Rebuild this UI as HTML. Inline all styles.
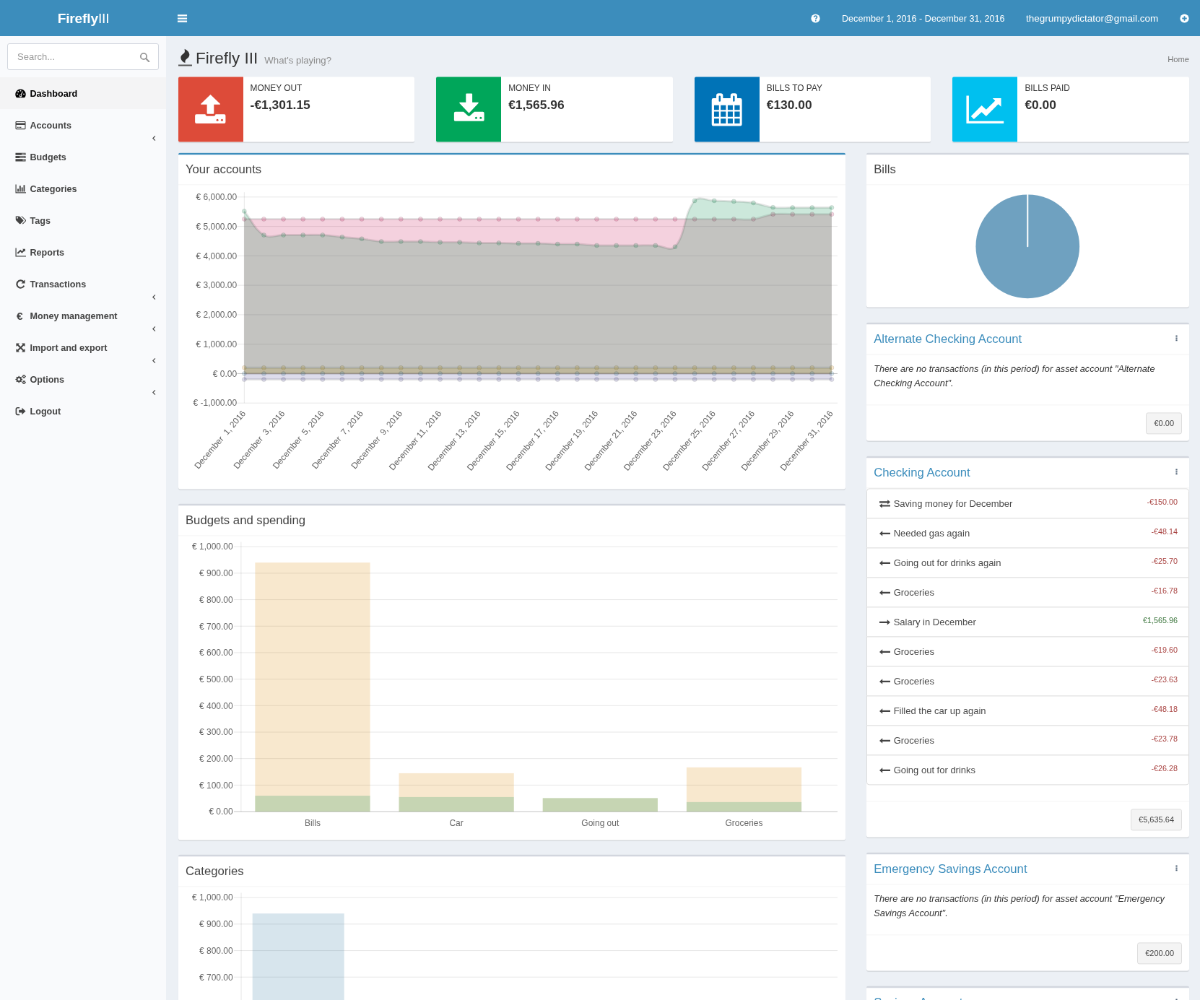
<!DOCTYPE html>
<html lang="en">
<head>
<meta charset="utf-8">
<title>What's playing? » Firefly III</title>
<style>
*{box-sizing:border-box}
html,body{margin:0;padding:0;width:1200px;height:1000px;overflow:hidden;background:#ecf0f5}
#wrap{will-change:transform;position:absolute;left:0;top:0;width:1662px;height:1386px;transform:scale(.72202);transform-origin:0 0;font-family:"Liberation Sans",sans-serif;font-size:13px;line-height:20px;color:#333;background:#ecf0f5;overflow:hidden}
a{color:#3c8dbc;text-decoration:none}
ul,ol{list-style:none;margin:0;padding:0}
svg.ic{display:inline-block;vertical-align:middle}
/* header */
.hdr{position:absolute;left:0;top:0;width:100%;height:50px;background:#3c8dbc;color:#fff}
.logo{position:absolute;left:0;top:1.100px;width:231px;height:50px;line-height:50px;text-align:center;color:#fff;font-size:19.200px;background:#3c8dbc;font-weight:300;letter-spacing:-.2px}
.logo b{font-weight:700}
.toggle{position:absolute;left:245px;top:0;height:50px;width:15px;color:#fff;display:flex;align-items:center}
.nv{position:absolute;top:1.100px;height:50px;line-height:50px;color:#fff;white-space:nowrap}
/* sidebar */
.sidebar{position:absolute;left:0;top:50px;width:231px;height:1340px;background:#f9fafc;border-right:1px solid #d2d6de}
.sform{margin:10px;height:37px;border:1px solid #d2d6de;border-radius:3px;background:#fff;position:relative}
.sform .ph{position:absolute;left:13px;top:0;line-height:35px;color:#999;font-size:13px}
.sform svg{position:absolute;right:11.500px;top:10.500px;color:#999}
.menu li{position:relative;height:44px}
.menu li a{display:block;height:44px;padding:13px 5px 11px 15px;color:#444;font-weight:700;font-size:12.6px;line-height:20px;white-space:nowrap;border-left:3px solid transparent}
.menu li.active a{background:#f4f4f5;color:#000}
.mi{display:inline-block;width:23.500px;padding-left:2.500px;vertical-align:top;line-height:18px}
.mi.euro{font-size:15.500px;padding-left:5px;line-height:19px}
.ml{display:inline-block;vertical-align:top}
.angle{position:absolute;right:12.500px;top:35.500px;color:#444;line-height:9px;height:9px}.angle svg{display:block}
/* content */
.cw{position:absolute;left:230px;top:50px;right:0;bottom:0;background:#ecf0f5}.ch,.content{transform:translateY(.4px)}
.ch{position:relative;padding:15px 15px 0 16.600px;height:41px}
.ch h1{margin:0;padding-left:24.500px;position:relative;top:2.800px;font-size:22.500px;line-height:26px;font-weight:400;color:#333;white-space:nowrap}
.ch h1 small{font-size:13.200px;color:#8c8c8c;font-weight:300;padding-left:9px}
.ch .fire{position:absolute;left:0;top:-1.300px}
.bc{position:absolute;right:15px;top:22px;font-size:11.200px;color:#777}
.content{padding:15px 15px 15px 16.600px}
.row{display:flex;margin:0 -15px}
.col3{width:25%;padding:0 15px}
.col8{width:954px;padding:0 15px;margin-left:.4px}
.col4{width:477px;padding:0 15px;margin-left:-.6px}.col4 .box{margin-bottom:21px}
.info-box{height:90px;background:#fff;border-radius:2px;box-shadow:0 1px 1px rgba(0,0,0,.1);margin-bottom:15px;position:relative}
.ibi{position:absolute;left:0;top:0;width:90px;height:90px;border-radius:2px 0 0 2px;color:#fff;display:flex;align-items:center;justify-content:center}
.ibc{margin-left:90px;padding:5px 10px}
.ibt{display:block;text-transform:uppercase;font-size:11.900px;line-height:20px;white-space:nowrap;position:relative;top:1.200px}
.ibn{display:block;font-weight:700;font-size:17.400px;line-height:26px;margin-top:1px}
.box{position:relative;background:#fff;border-top:3px solid #d2d6de;border-radius:3px;margin-bottom:20px;box-shadow:0 1px 1px rgba(0,0,0,.1)}
.box.primary{border-top-color:#3c8dbc}
.box-header{position:relative;padding:10.900px 10px 0;height:42px;color:#444}
.box-header.wb{border-bottom:1px solid #f4f4f4}
.box-title{margin:0;font-size:16.700px;line-height:20px;font-weight:400;display:inline-block;white-space:nowrap}
.tools{position:absolute;right:13px;top:8px;color:#97a0b3}
.tools svg{color:#54667a}
.box-body{padding:10px}
.box-body p{margin:0 0 9px;font-size:12.750px;line-height:20px}
.box-body em{font-style:italic}
.box-footer{border-top:1px solid #f4f4f4;padding:10px;height:50px;text-align:right}
.btn{display:inline-block;border:1px solid #ddd;background:#f4f4f4;color:#444;border-radius:3px;font-size:11px;line-height:18px;padding:5px 10px;height:30px}
svg.chart{position:absolute;left:0;top:-3px;width:100%;height:calc(100% + 3px);overflow:visible}
.chartbody{height:421px}
.lg{margin-bottom:22px;border-radius:4px}
.lgi{display:block;position:relative;height:42px;padding:10.800px 15px 0;border:1px solid #ddd;margin-bottom:-1px;background:#fff;color:#4a4a4a;font-size:13px;white-space:nowrap}
.lgi:first-child{border-radius:4px 4px 0 0}
.lgi:last-child{border-radius:0 0 4px 4px;margin-bottom:0}
.ti{display:inline-block;width:21.500px;padding-left:1.500px;color:#444;vertical-align:top;line-height:18px}
.tl{display:inline-block;vertical-align:top}
.amt{position:absolute;right:15px;top:7.800px;font-size:10.800px}
.neg{color:#a94442}.pos{color:#3c763d}
</style>
</head>
<body>
<div id="wrap">
<header class="hdr">
  <a class="logo"><b>Firefly</b>III</a>
  <a class="toggle"><svg class="ic" width="15" height="15" viewBox="0 0 16 16" ><path fill="currentColor" d="M1 2.5h14v2.4H1zM1 6.8h14v2.4H1zM1 11.1h14v2.4H1z"/></svg></a>
  <span class="nv" style="left:1123.400px;top:.4px"><svg class="ic" width="13" height="13" viewBox="0 0 16 16" ><circle cx="8" cy="8" r="7.5" fill="currentColor"/><path d="M5.6 6.2c0-1.5 1.1-2.5 2.5-2.5s2.4.9 2.4 2.1c0 1.7-2.1 1.8-2.1 3.6" fill="none" stroke="#3c8dbc" stroke-width="1.9"/><circle cx="8.3" cy="11.9" r="1.15" fill="#3c8dbc"/></svg></span>
  <span class="nv" style="left:1166px;font-size:12.600px">December 1, 2016 - December 31, 2016</span>
  <span class="nv" style="left:1421px;font-size:13.500px">thegrumpydictator@gmail.com</span>
  <span class="nv" style="left:1634.400px;top:.4px"><svg class="ic" width="13" height="13" viewBox="0 0 16 16" ><circle cx="8" cy="8" r="7.5" fill="currentColor"/><path d="M4 6.9h2.9V4h2.2v2.9H12v2.2H9.1V12H6.900V9.1H4z" fill="#3c8dbc"/></svg></span>
</header>
<aside class="sidebar">
  <div class="sform"><span class="ph">Search...</span><svg class="ic" width="14.5" height="14.5" viewBox="0 0 16 16" ><circle cx="6.6" cy="6.6" r="4.6" fill="none" stroke="currentColor" stroke-width="2"/><path d="M10 10l4.6 4.6" stroke="currentColor" stroke-width="2.4" stroke-linecap="round"/></svg></div>
  <ul class="menu">
<li class="active"><a><span class="mi"><svg class="ic" width="15" height="15" viewBox="0 0 16 16" ><path fill="currentColor" d="M8 1.6a7.6 7.6 0 0 0-6.300 11.900c.2.300.5.500.9.500h10.800c.4 0 .7-.2.900-.5A7.600 7.600 0 0 0 8 1.600z"/><g fill="#f4f4f5"><circle cx="8" cy="3.900" r="1"/><circle cx="4.500" cy="5.400" r="1"/><circle cx="3.200" cy="8.900" r="1"/><circle cx="12.800" cy="8.900" r="1"/><path d="M10.600 4.700l1.100.5-2.300 4.600a2 2 0 1 1-1.100-.500z"/></g><circle cx="8" cy="11" r="1" fill="currentColor"/></svg></span><span class="ml">Dashboard</span></a></li>
<li><a><span class="mi"><svg class="ic" width="15" height="15" viewBox="0 0 16 16" ><path fill="currentColor" fill-rule="evenodd" d="M1.800 2h12.400c.7 0 1.300.6 1.300 1.300v9.400c0 .7-.6 1.300-1.300 1.300H1.800C1.100 14 .5 13.400.5 12.700V3.300C.5 2.600 1.100 2 1.800 2zm-.1 1.300v1.500h12.600V3.300zM1.700 7.500v5.200h12.600V7.500zM3 10.500h2v1.100H3zm3 0h3v1.100H6z"/></svg></span><span class="ml">Accounts</span><span class="angle"><svg class="ic" width="9" height="9" viewBox="0 0 16 16" ><path fill="none" stroke="currentColor" stroke-width="2" d="M10.500 2.500L5 8l5.500 5.500"/></svg></span></a></li>
<li><a><span class="mi"><svg class="ic" width="15" height="15" viewBox="0 0 16 16" ><path fill="currentColor" d="M.5 1.800h15v3.300H.5zM.5 6.400h15v3.300H.5zM.5 11h15v3.300H.5z"/><path fill="#f9fafc" d="M9.500 2.900h4.800v1.100H9.500zM6.500 7.500h7.800v1.100H6.500zM11 12.100h3.300v1.100H11z"/></svg></span><span class="ml">Budgets</span></a></li>
<li><a><span class="mi"><svg class="ic" width="15" height="15" viewBox="0 0 16 16" ><path fill="currentColor" d="M.5 1.500h1.300v11.700H16v1.300H.5zM3.300 8h2v4.200h-2zM6.300 3.500h2v8.700h-2zM9.300 6h2v6.200h-2zM12.300 2.500h2v9.700h-2z"/></svg></span><span class="ml">Categories</span></a></li>
<li><a><span class="mi"><svg class="ic" width="15" height="15" viewBox="0 0 16 16" ><path fill="currentColor" d="M.8 1.500h4.500c.5 0 1.200.3 1.600.7l5 5c.5.500.5 1.200 0 1.700l-3.900 3.900c-.5.500-1.200.5-1.700 0l-5-5C1 7.400.8 6.700.8 6.200zm2.400 1.400a1.100 1.100 0 1 0 0 2.200 1.100 1.100 0 0 0 0-2.200zM8 1.500h1.300c.5 0 1.200.3 1.600.7l5 5c.5.500.5 1.200 0 1.700l-3.900 3.900c-.5.500-1.200.5-1.600.1l4-4.100c.5-.5.500-1.100 0-1.600l-5-5C9 1.800 8.500 1.600 8 1.500z"/></svg></span><span class="ml">Tags</span></a></li>
<li><a><span class="mi"><svg class="ic" width="15" height="15" viewBox="0 0 16 16" ><path fill="currentColor" d="M.5 1.500h1.300v11.700H16v1.300H.5zM14.800 3v4.200l-1.300-1.300-3.400 3.400-2.400-2.400-3.400 3.400-1.500-1.500 4.900-4.900 2.400 2.400 1.900-1.900L10.700 3z"/></svg></span><span class="ml">Reports</span></a></li>
<li><a><span class="mi"><svg class="ic" width="15" height="15" viewBox="0 0 16 16" ><path fill="currentColor" d="M14.500 1.500V7H9l2-2a4.300 4.300 0 1 0 1 4.800l2.100.8A6.600 6.600 0 1 1 12.700 3.300z"/></svg></span><span class="ml">Transactions</span><span class="angle"><svg class="ic" width="9" height="9" viewBox="0 0 16 16" ><path fill="none" stroke="currentColor" stroke-width="2" d="M10.500 2.500L5 8l5.500 5.500"/></svg></span></a></li>
<li><a><span class="mi euro">€</span><span class="ml">Money management</span><span class="angle"><svg class="ic" width="9" height="9" viewBox="0 0 16 16" ><path fill="none" stroke="currentColor" stroke-width="2" d="M10.500 2.500L5 8l5.500 5.500"/></svg></span></a></li>
<li><a><span class="mi"><svg class="ic" width="15" height="15" viewBox="0 0 16 16" ><path fill="currentColor" d="M1.500 1.500h5L4.800 3.200 8 6.400l3.200-3.200-1.700-1.700h5v5l-1.700-1.700L9.600 8l3.200 3.200 1.700-1.700v5h-5l1.700-1.700L8 9.600l-3.200 3.200 1.700 1.700h-5v-5l1.700 1.700L6.400 8 3.200 4.800 1.500 6.500z"/></svg></span><span class="ml">Import and export</span><span class="angle"><svg class="ic" width="9" height="9" viewBox="0 0 16 16" ><path fill="none" stroke="currentColor" stroke-width="2" d="M10.500 2.500L5 8l5.500 5.500"/></svg></span></a></li>
<li><a><span class="mi"><svg class="ic" width="15" height="15" viewBox="0 0 16 16" ><path fill="currentColor" fill-rule="evenodd" d="M10.77 7.49L10.77 8.51L9.33 9.13L9.04 9.84L9.62 11.30L8.90 12.02L7.44 11.44L6.73 11.73L6.11 13.17L5.09 13.17L4.47 11.73L3.76 11.44L2.30 12.02L1.58 11.30L2.16 9.84L1.87 9.13L0.43 8.51L0.43 7.49L1.87 6.87L2.16 6.16L1.58 4.70L2.30 3.98L3.76 4.56L4.47 4.27L5.09 2.83L6.11 2.83L6.73 4.27L7.44 4.56L8.90 3.98L9.62 4.70L9.04 6.16L9.33 6.87ZM3.70 8.00a1.90 1.90 0 1 0 3.80 0a1.90 1.90 0 1 0 -3.80 0zM15.88 3.32L15.88 4.08L14.94 4.50L14.67 4.98L14.77 6.00L14.11 6.38L13.27 5.78L12.73 5.78L11.89 6.38L11.23 6.00L11.33 4.98L11.06 4.50L10.12 4.08L10.12 3.32L11.06 2.90L11.33 2.42L11.23 1.40L11.89 1.02L12.73 1.62L13.27 1.62L14.11 1.02L14.77 1.40L14.67 2.42L14.94 2.90ZM12.10 3.70a0.90 0.90 0 1 0 1.80 0a0.90 0.90 0 1 0 -1.80 0zM15.88 11.92L15.88 12.68L14.94 13.10L14.67 13.58L14.77 14.60L14.11 14.98L13.27 14.38L12.73 14.38L11.89 14.98L11.23 14.60L11.33 13.58L11.06 13.10L10.12 12.68L10.12 11.92L11.06 11.50L11.33 11.02L11.23 10.00L11.89 9.62L12.73 10.22L13.27 10.22L14.11 9.62L14.77 10.00L14.67 11.02L14.94 11.50ZM12.10 12.30a0.90 0.90 0 1 0 1.80 0a0.90 0.90 0 1 0 -1.80 0z"/></svg></span><span class="ml">Options</span><span class="angle"><svg class="ic" width="9" height="9" viewBox="0 0 16 16" ><path fill="none" stroke="currentColor" stroke-width="2" d="M10.500 2.500L5 8l5.500 5.500"/></svg></span></a></li>
<li><a><span class="mi"><svg class="ic" width="15" height="15" viewBox="0 0 16 16" ><path fill="currentColor" d="M6.500 2v1.800H3.600c-.7 0-1.200.5-1.200 1.200v6c0 .7.500 1.200 1.200 1.200h2.900V14H3.600A3 3 0 0 1 .6 11V5a3 3 0 0 1 3-3zM10 3l5.500 5-5.500 5v-3H5.500V6H10z"/></svg></span><span class="ml">Logout</span></a></li>

  </ul>
</aside>
<div class="cw">
  <section class="ch">
    <h1><svg class="ic fire" width="18.97" height="24.51" viewBox="0 0 13.7 17.7" ><path fill="#333" d="M6.200 .3C7.600 1 11.100 3 11.100 6.100C11.100 9.500 7 10.500 6.900 12.300C6.850 13 6.700 13.600 6.900 14.300C4.500 13.300 2.400 11.300 2.400 8.700C2.400 5.500 6.900 5 6.400 2.500C6.400 1.700 6.300 1 6.200 .3Z"/><path fill="#555" d="M0 16H13.700V17.700H0Z"/></svg>Firefly III<small>What's playing?</small></h1>
    <ol class="bc"><li>Home</li></ol>
  </section>
  <section class="content">
    <div class="row">
      <div class="col3"><div class="info-box"><span class="ibi" style="background:#dd4b39"><svg class="ic" width="45" height="45" viewBox="0 0 48 48" overflow="visible"><path fill="currentColor" d="M24 1.6L38.2 15.200Q39 16.400 37.500 16.400H29.100V29.300Q29.100 30.300 28.100 30.300H19.800Q18.800 30.300 18.800 29.300V16.400H10.500Q9 16.400 9.850 15.200ZM3.200 30.800H16.400Q16.400 33.400 19 33.400H29Q31.500 33.400 31.500 30.800H44.300a2 2 0 0 1 2 2V42.300a2 2 0 0 1-2 2H3.200a2 2 0 0 1-2-2V32.800a2 2 0 0 1 2-2Z"/><circle cx="34.200" cy="39.400" r="1.600" fill="#dd4b39"/><circle cx="41" cy="39.400" r="1.600" fill="#dd4b39"/></svg></span><div class="ibc"><span class="ibt">Money out</span><span class="ibn">-€1,301.15</span></div></div></div>
      <div class="col3"><div class="info-box"><span class="ibi" style="background:#00a65a"><svg class="ic" width="45" height="45" viewBox="0 0 48 48" overflow="visible"><path fill="currentColor" d="M20.500 0H27.900Q28.900 0 28.900 1V13.300H37.300Q38.800 13.300 37.900 14.500L24 29.300L10.100 14.500Q9.200 13.300 10.700 13.300H19.500V1Q19.500 0 20.500 0ZM4 27.100H16L22.800 33.200Q24 34.200 25.200 33.200L32 27.100H44.500a2 2 0 0 1 2 2V39a2 2 0 0 1-2 2H4a2 2 0 0 1-2-2V29.100a2 2 0 0 1 2-2Z"/><circle cx="34.600" cy="36.100" r="1.600" fill="#00a65a"/><circle cx="41.400" cy="36.100" r="1.600" fill="#00a65a"/></svg></span><div class="ibc"><span class="ibt">Money in</span><span class="ibn">€1,565.96</span></div></div></div>
      <div class="col3"><div class="info-box"><span class="ibi" style="background:#0073b7"><svg class="ic" width="45" height="45" viewBox="0 0 48 48" overflow="visible"><path fill="currentColor" fill-rule="evenodd" d="M4.300 7.100H8.600V3.200Q8.600 -.2 12 -.2H15.100Q18.500 -.2 18.500 3.200V7.100H29.600V3.200Q29.600 -.2 33 -.2H36Q39.400 -.2 39.400 3.200V7.100H44Q46.500 7.100 46.500 9.600V45.600Q46.500 48.100 44 48.100H4.300Q1.850 48.100 1.850 45.600V9.600Q1.850 7.100 4.300 7.100ZM12.300 4.400V11Q12.300 12 13.600 12Q15 12 15 11V4.400Q15 3.400 13.600 3.400Q12.300 3.400 12.300 4.400ZM33.200 4.400V11Q33.200 12 34.500 12Q35.900 12 35.900 11V4.400Q35.900 3.400 34.500 3.400Q33.200 3.400 33.200 4.400ZM5.3 17.4V24.4H12.6V17.4ZM5.3 26.8V34.6H12.6V26.8ZM5.3 37.1V44.3H12.6V37.1ZM15.1 17.4V24.4H22.8V17.4ZM15.1 26.8V34.6H22.8V26.8ZM15.1 37.1V44.3H22.8V37.1ZM25.5 17.4V24.4H33V17.4ZM25.5 26.8V34.6H33V26.8ZM25.5 37.1V44.3H33V37.1ZM35.7 17.4V24.4H43.3V17.4ZM35.7 26.8V34.6H43.3V26.8ZM35.7 37.1V44.3H43.3V37.1Z"/></svg></span><div class="ibc"><span class="ibt">Bills to pay</span><span class="ibn">€130.00</span></div></div></div>
      <div class="col3"><div class="info-box"><span class="ibi" style="background:#00c0ef"><svg class="ic" width="45" height="45" viewBox="0 0 48 48" overflow="visible"><path fill="currentColor" d="M-3.800 3.200H-.1V41H51.400V44.300H-3.800ZM3 33.600L18.700 17.600L25.400 23.800L38.700 10.800L35 7.100H47.500V19.700L43.300 15.800L25.400 33.600L18.700 27.500L7.300 37.900Z"/></svg></span><div class="ibc"><span class="ibt">Bills paid</span><span class="ibn">€0.00</span></div></div></div>
    </div>
    <div class="row">
      <div class="col8">
        <div class="box primary">
          <div class="box-header wb"><h3 class="box-title">Your accounts</h3></div>
          <div class="box-body chartbody"></div>
          <svg class="chart" viewBox="178.34 152.64 667.15 336.46" preserveAspectRatio="none" font-family="Liberation Sans, sans-serif" font-size="8.66" fill="#666">
<line x1="237.2" x2="837.7" y1="197" y2="197" stroke="rgba(0,0,0,0.1)" stroke-width="0.72"/>
<text x="236.9" y="200.12" text-anchor="end">€ 6,000.00</text>
<line x1="237.2" x2="837.7" y1="226.43" y2="226.43" stroke="rgba(0,0,0,0.1)" stroke-width="0.72"/>
<text x="236.9" y="229.55" text-anchor="end">€ 5,000.00</text>
<line x1="237.2" x2="837.7" y1="255.87" y2="255.87" stroke="rgba(0,0,0,0.1)" stroke-width="0.72"/>
<text x="236.9" y="258.99" text-anchor="end">€ 4,000.00</text>
<line x1="237.2" x2="837.7" y1="285.3" y2="285.3" stroke="rgba(0,0,0,0.1)" stroke-width="0.72"/>
<text x="236.9" y="288.42" text-anchor="end">€ 3,000.00</text>
<line x1="237.2" x2="837.7" y1="314.73" y2="314.73" stroke="rgba(0,0,0,0.1)" stroke-width="0.72"/>
<text x="236.9" y="317.85" text-anchor="end">€ 2,000.00</text>
<line x1="237.2" x2="837.7" y1="344.17" y2="344.17" stroke="rgba(0,0,0,0.1)" stroke-width="0.72"/>
<text x="236.9" y="347.29" text-anchor="end">€ 1,000.00</text>
<line x1="237.2" x2="837.7" y1="373.6" y2="373.6" stroke="rgba(0,0,0,0.25)" stroke-width="0.72"/>
<text x="236.9" y="376.72" text-anchor="end">€ 0.00</text>
<line x1="237.2" x2="837.7" y1="403.03" y2="403.03" stroke="rgba(0,0,0,0.1)" stroke-width="0.72"/>
<text x="236.9" y="406.15" text-anchor="end">€ -1,000.00</text>
<line x1="244.3" x2="244.3" y1="192.2" y2="403.03" stroke="rgba(0,0,0,0.1)" stroke-width="0.72"/>
<path d="M244.3 379.49C252.13 379.49 256.05 379.49 263.89 379.49C271.72 379.49 275.64 379.49 283.47 379.49C291.31 379.49 295.23 379.49 303.06 379.49C310.89 379.49 314.81 379.49 322.65 379.49C330.48 379.49 334.4 379.49 342.23 379.49C350.07 379.49 353.99 379.49 361.82 379.49C369.65 379.49 373.57 379.49 381.41 379.49C389.24 379.49 393.16 379.49 400.99 379.49C408.83 379.49 412.75 379.49 420.58 379.49C428.41 379.49 432.33 379.49 440.17 379.49C448 379.49 451.92 379.49 459.75 379.49C467.59 379.49 471.51 379.49 479.34 379.49C487.17 379.49 491.09 379.49 498.93 379.49C506.76 379.49 510.68 379.49 518.51 379.49C526.35 379.49 530.27 379.49 538.1 379.49C545.93 379.49 549.85 379.49 557.69 379.49C565.52 379.49 569.44 379.49 577.27 379.49C585.11 379.49 589.03 379.49 596.86 379.49C604.69 379.49 608.61 379.49 616.45 379.49C624.28 379.49 628.2 379.49 636.03 379.49C643.87 379.49 647.79 379.49 655.62 379.49C663.45 379.49 667.37 379.49 675.21 379.49C683.04 379.49 686.96 379.49 694.79 379.49C702.63 379.49 706.55 379.49 714.38 379.49C722.21 379.49 726.13 379.49 733.97 379.49C741.8 379.49 745.72 379.49 753.55 379.49C761.39 379.49 765.31 379.49 773.14 379.49C780.97 379.49 784.89 379.49 792.73 379.49C800.56 379.49 804.48 379.49 812.31 379.49C820.15 379.49 824.07 379.49 831.9 379.49L831.9 373.6L244.3 373.6Z" fill="rgba(85,82,153,0.2)" stroke="none"/>
<path d="M244.3 379.49C252.13 379.49 256.05 379.49 263.89 379.49C271.72 379.49 275.64 379.49 283.47 379.49C291.31 379.49 295.23 379.49 303.06 379.49C310.89 379.49 314.81 379.49 322.65 379.49C330.48 379.49 334.4 379.49 342.23 379.49C350.07 379.49 353.99 379.49 361.82 379.49C369.65 379.49 373.57 379.49 381.41 379.49C389.24 379.49 393.16 379.49 400.99 379.49C408.83 379.49 412.75 379.49 420.58 379.49C428.41 379.49 432.33 379.49 440.17 379.49C448 379.49 451.92 379.49 459.75 379.49C467.59 379.49 471.51 379.49 479.34 379.49C487.17 379.49 491.09 379.49 498.93 379.49C506.76 379.49 510.68 379.49 518.51 379.49C526.35 379.49 530.27 379.49 538.1 379.49C545.93 379.49 549.85 379.49 557.69 379.49C565.52 379.49 569.44 379.49 577.27 379.49C585.11 379.49 589.03 379.49 596.86 379.49C604.69 379.49 608.61 379.49 616.45 379.49C624.28 379.49 628.2 379.49 636.03 379.49C643.87 379.49 647.79 379.49 655.62 379.49C663.45 379.49 667.37 379.49 675.21 379.49C683.04 379.49 686.96 379.49 694.79 379.49C702.63 379.49 706.55 379.49 714.38 379.49C722.21 379.49 726.13 379.49 733.97 379.49C741.8 379.49 745.72 379.49 753.55 379.49C761.39 379.49 765.31 379.49 773.14 379.49C780.97 379.49 784.89 379.49 792.73 379.49C800.56 379.49 804.48 379.49 812.31 379.49C820.15 379.49 824.07 379.49 831.9 379.49" fill="none" stroke="rgba(0,0,0,0.1)" stroke-width="2.17"/>
<g fill="rgba(85,82,153,0.2)" stroke="rgba(0,0,0,0.1)" stroke-width="0.72">
<circle cx="244.3" cy="379.49" r="2.17"/>
<circle cx="263.89" cy="379.49" r="2.17"/>
<circle cx="283.47" cy="379.49" r="2.17"/>
<circle cx="303.06" cy="379.49" r="2.17"/>
<circle cx="322.65" cy="379.49" r="2.17"/>
<circle cx="342.23" cy="379.49" r="2.17"/>
<circle cx="361.82" cy="379.49" r="2.17"/>
<circle cx="381.41" cy="379.49" r="2.17"/>
<circle cx="400.99" cy="379.49" r="2.17"/>
<circle cx="420.58" cy="379.49" r="2.17"/>
<circle cx="440.17" cy="379.49" r="2.17"/>
<circle cx="459.75" cy="379.49" r="2.17"/>
<circle cx="479.34" cy="379.49" r="2.17"/>
<circle cx="498.93" cy="379.49" r="2.17"/>
<circle cx="518.51" cy="379.49" r="2.17"/>
<circle cx="538.1" cy="379.49" r="2.17"/>
<circle cx="557.69" cy="379.49" r="2.17"/>
<circle cx="577.27" cy="379.49" r="2.17"/>
<circle cx="596.86" cy="379.49" r="2.17"/>
<circle cx="616.45" cy="379.49" r="2.17"/>
<circle cx="636.03" cy="379.49" r="2.17"/>
<circle cx="655.62" cy="379.49" r="2.17"/>
<circle cx="675.21" cy="379.49" r="2.17"/>
<circle cx="694.79" cy="379.49" r="2.17"/>
<circle cx="714.38" cy="379.49" r="2.17"/>
<circle cx="733.97" cy="379.49" r="2.17"/>
<circle cx="753.55" cy="379.49" r="2.17"/>
<circle cx="773.14" cy="379.49" r="2.17"/>
<circle cx="792.73" cy="379.49" r="2.17"/>
<circle cx="812.31" cy="379.49" r="2.17"/>
<circle cx="831.9" cy="379.49" r="2.17"/>
</g>
<path d="M244.3 219.07C252.13 219.07 256.05 219.07 263.89 219.07C271.72 219.07 275.64 219.07 283.47 219.07C291.31 219.07 295.23 219.07 303.06 219.07C310.89 219.07 314.81 219.07 322.65 219.07C330.48 219.07 334.4 219.07 342.23 219.07C350.07 219.07 353.99 219.07 361.82 219.07C369.65 219.07 373.57 219.07 381.41 219.07C389.24 219.07 393.16 219.07 400.99 219.07C408.83 219.07 412.75 219.07 420.58 219.07C428.41 219.07 432.33 219.07 440.17 219.07C448 219.07 451.92 219.07 459.75 219.07C467.59 219.07 471.51 219.07 479.34 219.07C487.17 219.07 491.09 219.07 498.93 219.07C506.76 219.07 510.68 219.07 518.51 219.07C526.35 219.07 530.27 219.07 538.1 219.07C545.93 219.07 549.85 219.07 557.69 219.07C565.52 219.07 569.44 219.07 577.27 219.07C585.11 219.07 589.03 219.07 596.86 219.07C604.69 219.07 608.61 219.07 616.45 219.07C624.28 219.07 628.2 219.07 636.03 219.07C643.87 219.07 647.79 219.07 655.62 219.07C663.45 219.07 667.37 219.07 675.21 219.07C683.04 219.07 686.96 219.07 694.79 219.07C702.63 219.07 706.55 219.07 714.38 219.07C722.21 219.07 726.13 219.07 733.97 219.07C741.8 219.07 745.84 220.03 753.55 219.07C761.5 218.09 765.19 215.2 773.14 214.22C780.86 213.26 784.89 214.22 792.73 214.22C800.56 214.22 804.48 214.22 812.31 214.22C820.15 214.22 824.07 214.22 831.9 214.22L831.9 373.6L244.3 373.6Z" fill="rgba(202,25,90,0.2)" stroke="none"/>
<path d="M244.3 219.07C252.13 219.07 256.05 219.07 263.89 219.07C271.72 219.07 275.64 219.07 283.47 219.07C291.31 219.07 295.23 219.07 303.06 219.07C310.89 219.07 314.81 219.07 322.65 219.07C330.48 219.07 334.4 219.07 342.23 219.07C350.07 219.07 353.99 219.07 361.82 219.07C369.65 219.07 373.57 219.07 381.41 219.07C389.24 219.07 393.16 219.07 400.99 219.07C408.83 219.07 412.75 219.07 420.58 219.07C428.41 219.07 432.33 219.07 440.17 219.07C448 219.07 451.92 219.07 459.75 219.07C467.59 219.07 471.51 219.07 479.34 219.07C487.17 219.07 491.09 219.07 498.93 219.07C506.76 219.07 510.68 219.07 518.51 219.07C526.35 219.07 530.27 219.07 538.1 219.07C545.93 219.07 549.85 219.07 557.69 219.07C565.52 219.07 569.44 219.07 577.27 219.07C585.11 219.07 589.03 219.07 596.86 219.07C604.69 219.07 608.61 219.07 616.45 219.07C624.28 219.07 628.2 219.07 636.03 219.07C643.87 219.07 647.79 219.07 655.62 219.07C663.45 219.07 667.37 219.07 675.21 219.07C683.04 219.07 686.96 219.07 694.79 219.07C702.63 219.07 706.55 219.07 714.38 219.07C722.21 219.07 726.13 219.07 733.97 219.07C741.8 219.07 745.84 220.03 753.55 219.07C761.5 218.09 765.19 215.2 773.14 214.22C780.86 213.26 784.89 214.22 792.73 214.22C800.56 214.22 804.48 214.22 812.31 214.22C820.15 214.22 824.07 214.22 831.9 214.22" fill="none" stroke="rgba(0,0,0,0.1)" stroke-width="2.17"/>
<g fill="rgba(202,25,90,0.2)" stroke="rgba(0,0,0,0.1)" stroke-width="0.72">
<circle cx="244.3" cy="219.07" r="2.17"/>
<circle cx="263.89" cy="219.07" r="2.17"/>
<circle cx="283.47" cy="219.07" r="2.17"/>
<circle cx="303.06" cy="219.07" r="2.17"/>
<circle cx="322.65" cy="219.07" r="2.17"/>
<circle cx="342.23" cy="219.07" r="2.17"/>
<circle cx="361.82" cy="219.07" r="2.17"/>
<circle cx="381.41" cy="219.07" r="2.17"/>
<circle cx="400.99" cy="219.07" r="2.17"/>
<circle cx="420.58" cy="219.07" r="2.17"/>
<circle cx="440.17" cy="219.07" r="2.17"/>
<circle cx="459.75" cy="219.07" r="2.17"/>
<circle cx="479.34" cy="219.07" r="2.17"/>
<circle cx="498.93" cy="219.07" r="2.17"/>
<circle cx="518.51" cy="219.07" r="2.17"/>
<circle cx="538.1" cy="219.07" r="2.17"/>
<circle cx="557.69" cy="219.07" r="2.17"/>
<circle cx="577.27" cy="219.07" r="2.17"/>
<circle cx="596.86" cy="219.07" r="2.17"/>
<circle cx="616.45" cy="219.07" r="2.17"/>
<circle cx="636.03" cy="219.07" r="2.17"/>
<circle cx="655.62" cy="219.07" r="2.17"/>
<circle cx="675.21" cy="219.07" r="2.17"/>
<circle cx="694.79" cy="219.07" r="2.17"/>
<circle cx="714.38" cy="219.07" r="2.17"/>
<circle cx="733.97" cy="219.07" r="2.17"/>
<circle cx="753.55" cy="219.07" r="2.17"/>
<circle cx="773.14" cy="214.22" r="2.17"/>
<circle cx="792.73" cy="214.22" r="2.17"/>
<circle cx="812.31" cy="214.22" r="2.17"/>
<circle cx="831.9" cy="214.22" r="2.17"/>
</g>
<path d="M244.3 367.71C252.13 367.71 256.05 367.71 263.89 367.71C271.72 367.71 275.64 367.71 283.47 367.71C291.31 367.71 295.23 367.71 303.06 367.71C310.89 367.71 314.81 367.71 322.65 367.71C330.48 367.71 334.4 367.71 342.23 367.71C350.07 367.71 353.99 367.71 361.82 367.71C369.65 367.71 373.57 367.71 381.41 367.71C389.24 367.71 393.16 367.71 400.99 367.71C408.83 367.71 412.75 367.71 420.58 367.71C428.41 367.71 432.33 367.71 440.17 367.71C448 367.71 451.92 367.71 459.75 367.71C467.59 367.71 471.51 367.71 479.34 367.71C487.17 367.71 491.09 367.71 498.93 367.71C506.76 367.71 510.68 367.71 518.51 367.71C526.35 367.71 530.27 367.71 538.1 367.71C545.93 367.71 549.85 367.71 557.69 367.71C565.52 367.71 569.44 367.71 577.27 367.71C585.11 367.71 589.03 367.71 596.86 367.71C604.69 367.71 608.61 367.71 616.45 367.71C624.28 367.71 628.2 367.71 636.03 367.71C643.87 367.71 647.79 367.71 655.62 367.71C663.45 367.71 667.37 367.71 675.21 367.71C683.04 367.71 686.96 367.71 694.79 367.71C702.63 367.71 706.55 367.71 714.38 367.71C722.21 367.71 726.13 367.71 733.97 367.71C741.8 367.71 745.72 367.71 753.55 367.71C761.39 367.71 765.31 367.71 773.14 367.71C780.97 367.71 784.89 367.71 792.73 367.71C800.56 367.71 804.48 367.71 812.31 367.71C820.15 367.71 824.07 367.71 831.9 367.71L831.9 373.6L244.3 373.6Z" fill="rgba(219,139,11,0.2)" stroke="none"/>
<path d="M244.3 367.71C252.13 367.71 256.05 367.71 263.89 367.71C271.72 367.71 275.64 367.71 283.47 367.71C291.31 367.71 295.23 367.71 303.06 367.71C310.89 367.71 314.81 367.71 322.65 367.71C330.48 367.71 334.4 367.71 342.23 367.71C350.07 367.71 353.99 367.71 361.82 367.71C369.65 367.71 373.57 367.71 381.41 367.71C389.24 367.71 393.16 367.71 400.99 367.71C408.83 367.71 412.75 367.71 420.58 367.71C428.41 367.71 432.33 367.71 440.17 367.71C448 367.71 451.92 367.71 459.75 367.71C467.59 367.71 471.51 367.71 479.34 367.71C487.17 367.71 491.09 367.71 498.93 367.71C506.76 367.71 510.68 367.71 518.51 367.71C526.35 367.71 530.27 367.71 538.1 367.71C545.93 367.71 549.85 367.71 557.69 367.71C565.52 367.71 569.44 367.71 577.27 367.71C585.11 367.71 589.03 367.71 596.86 367.71C604.69 367.71 608.61 367.71 616.45 367.71C624.28 367.71 628.2 367.71 636.03 367.71C643.87 367.71 647.79 367.71 655.62 367.71C663.45 367.71 667.37 367.71 675.21 367.71C683.04 367.71 686.96 367.71 694.79 367.71C702.63 367.71 706.55 367.71 714.38 367.71C722.21 367.71 726.13 367.71 733.97 367.71C741.8 367.71 745.72 367.71 753.55 367.71C761.39 367.71 765.31 367.71 773.14 367.71C780.97 367.71 784.89 367.71 792.73 367.71C800.56 367.71 804.48 367.71 812.31 367.71C820.15 367.71 824.07 367.71 831.9 367.71" fill="none" stroke="rgba(0,0,0,0.1)" stroke-width="2.17"/>
<g fill="rgba(219,139,11,0.2)" stroke="rgba(0,0,0,0.1)" stroke-width="0.72">
<circle cx="244.3" cy="367.71" r="2.17"/>
<circle cx="263.89" cy="367.71" r="2.17"/>
<circle cx="283.47" cy="367.71" r="2.17"/>
<circle cx="303.06" cy="367.71" r="2.17"/>
<circle cx="322.65" cy="367.71" r="2.17"/>
<circle cx="342.23" cy="367.71" r="2.17"/>
<circle cx="361.82" cy="367.71" r="2.17"/>
<circle cx="381.41" cy="367.71" r="2.17"/>
<circle cx="400.99" cy="367.71" r="2.17"/>
<circle cx="420.58" cy="367.71" r="2.17"/>
<circle cx="440.17" cy="367.71" r="2.17"/>
<circle cx="459.75" cy="367.71" r="2.17"/>
<circle cx="479.34" cy="367.71" r="2.17"/>
<circle cx="498.93" cy="367.71" r="2.17"/>
<circle cx="518.51" cy="367.71" r="2.17"/>
<circle cx="538.1" cy="367.71" r="2.17"/>
<circle cx="557.69" cy="367.71" r="2.17"/>
<circle cx="577.27" cy="367.71" r="2.17"/>
<circle cx="596.86" cy="367.71" r="2.17"/>
<circle cx="616.45" cy="367.71" r="2.17"/>
<circle cx="636.03" cy="367.71" r="2.17"/>
<circle cx="655.62" cy="367.71" r="2.17"/>
<circle cx="675.21" cy="367.71" r="2.17"/>
<circle cx="694.79" cy="367.71" r="2.17"/>
<circle cx="714.38" cy="367.71" r="2.17"/>
<circle cx="733.97" cy="367.71" r="2.17"/>
<circle cx="753.55" cy="367.71" r="2.17"/>
<circle cx="773.14" cy="367.71" r="2.17"/>
<circle cx="792.73" cy="367.71" r="2.17"/>
<circle cx="812.31" cy="367.71" r="2.17"/>
<circle cx="831.9" cy="367.71" r="2.17"/>
</g>
<path d="M244.3 211.19C252.13 220.72 254.3 229.19 263.89 235.03C269.97 238.73 275.64 235.03 283.47 235.03C291.31 235.03 295.23 235.03 303.06 235.03C310.89 235.03 314.83 234.63 322.65 235.03C330.5 235.43 334.39 236.28 342.23 237.03C350.06 237.78 354.01 237.9 361.82 238.8C369.68 239.7 373.53 240.98 381.41 241.53C389.2 242.08 393.16 241.53 400.99 241.53C408.83 241.53 412.75 241.39 420.58 241.53C428.42 241.67 432.33 242.1 440.17 242.24C448 242.38 451.92 242.1 459.75 242.24C467.59 242.38 471.5 242.8 479.34 242.95C487.17 243.09 491.09 242.86 498.93 242.95C506.76 243.03 510.68 243.28 518.51 243.36C526.35 243.44 530.27 243.22 538.1 243.36C545.94 243.5 549.85 243.92 557.69 244.06C565.52 244.21 569.45 243.79 577.27 244.06C585.12 244.34 589.02 245.17 596.86 245.45C604.68 245.72 608.61 245.45 616.45 245.45C624.28 245.45 628.2 245.45 636.03 245.45C643.87 245.45 647.79 245.19 655.62 245.45C663.46 245.71 670.79 251.79 675.21 246.74C686.46 233.87 683.53 213.9 694.79 200.65C699.2 195.47 706.55 200.5 714.38 200.65C722.22 200.8 726.14 200.95 733.97 201.39C741.81 201.82 745.81 201.65 753.55 202.83C761.48 204.04 765.2 206.39 773.14 207.36C780.87 208.3 784.89 207.55 792.73 207.6C800.56 207.64 804.48 207.6 812.31 207.6C820.15 207.6 824.07 207.6 831.9 207.6L831.9 373.6L244.3 373.6Z" fill="rgba(0,141,76,0.2)" stroke="none"/>
<path d="M244.3 211.19C252.13 220.72 254.3 229.19 263.89 235.03C269.97 238.73 275.64 235.03 283.47 235.03C291.31 235.03 295.23 235.03 303.06 235.03C310.89 235.03 314.83 234.63 322.65 235.03C330.5 235.43 334.39 236.28 342.23 237.03C350.06 237.78 354.01 237.9 361.82 238.8C369.68 239.7 373.53 240.98 381.41 241.53C389.2 242.08 393.16 241.53 400.99 241.53C408.83 241.53 412.75 241.39 420.58 241.53C428.42 241.67 432.33 242.1 440.17 242.24C448 242.38 451.92 242.1 459.75 242.24C467.59 242.38 471.5 242.8 479.34 242.95C487.17 243.09 491.09 242.86 498.93 242.95C506.76 243.03 510.68 243.28 518.51 243.36C526.35 243.44 530.27 243.22 538.1 243.36C545.94 243.5 549.85 243.92 557.69 244.06C565.52 244.21 569.45 243.79 577.27 244.06C585.12 244.34 589.02 245.17 596.86 245.45C604.68 245.72 608.61 245.45 616.45 245.45C624.28 245.45 628.2 245.45 636.03 245.45C643.87 245.45 647.79 245.19 655.62 245.45C663.46 245.71 670.79 251.79 675.21 246.74C686.46 233.87 683.53 213.9 694.79 200.65C699.2 195.47 706.55 200.5 714.38 200.65C722.22 200.8 726.14 200.95 733.97 201.39C741.81 201.82 745.81 201.65 753.55 202.83C761.48 204.04 765.2 206.39 773.14 207.36C780.87 208.3 784.89 207.55 792.73 207.6C800.56 207.64 804.48 207.6 812.31 207.6C820.15 207.6 824.07 207.6 831.9 207.6" fill="none" stroke="rgba(0,0,0,0.1)" stroke-width="2.17"/>
<g fill="rgba(0,141,76,0.2)" stroke="rgba(0,0,0,0.1)" stroke-width="0.72">
<circle cx="244.3" cy="211.19" r="2.17"/>
<circle cx="263.89" cy="235.03" r="2.17"/>
<circle cx="283.47" cy="235.03" r="2.17"/>
<circle cx="303.06" cy="235.03" r="2.17"/>
<circle cx="322.65" cy="235.03" r="2.17"/>
<circle cx="342.23" cy="237.03" r="2.17"/>
<circle cx="361.82" cy="238.8" r="2.17"/>
<circle cx="381.41" cy="241.53" r="2.17"/>
<circle cx="400.99" cy="241.53" r="2.17"/>
<circle cx="420.58" cy="241.53" r="2.17"/>
<circle cx="440.17" cy="242.24" r="2.17"/>
<circle cx="459.75" cy="242.24" r="2.17"/>
<circle cx="479.34" cy="242.95" r="2.17"/>
<circle cx="498.93" cy="242.95" r="2.17"/>
<circle cx="518.51" cy="243.36" r="2.17"/>
<circle cx="538.1" cy="243.36" r="2.17"/>
<circle cx="557.69" cy="244.06" r="2.17"/>
<circle cx="577.27" cy="244.06" r="2.17"/>
<circle cx="596.86" cy="245.45" r="2.17"/>
<circle cx="616.45" cy="245.45" r="2.17"/>
<circle cx="636.03" cy="245.45" r="2.17"/>
<circle cx="655.62" cy="245.45" r="2.17"/>
<circle cx="675.21" cy="246.74" r="2.17"/>
<circle cx="694.79" cy="200.65" r="2.17"/>
<circle cx="714.38" cy="200.65" r="2.17"/>
<circle cx="733.97" cy="201.39" r="2.17"/>
<circle cx="753.55" cy="202.83" r="2.17"/>
<circle cx="773.14" cy="207.36" r="2.17"/>
<circle cx="792.73" cy="207.6" r="2.17"/>
<circle cx="812.31" cy="207.6" r="2.17"/>
<circle cx="831.9" cy="207.6" r="2.17"/>
</g>
<path d="M244.3 373.6C252.13 373.6 256.05 373.6 263.89 373.6C271.72 373.6 275.64 373.6 283.47 373.6C291.31 373.6 295.23 373.6 303.06 373.6C310.89 373.6 314.81 373.6 322.65 373.6C330.48 373.6 334.4 373.6 342.23 373.6C350.07 373.6 353.99 373.6 361.82 373.6C369.65 373.6 373.57 373.6 381.41 373.6C389.24 373.6 393.16 373.6 400.99 373.6C408.83 373.6 412.75 373.6 420.58 373.6C428.41 373.6 432.33 373.6 440.17 373.6C448 373.6 451.92 373.6 459.75 373.6C467.59 373.6 471.51 373.6 479.34 373.6C487.17 373.6 491.09 373.6 498.93 373.6C506.76 373.6 510.68 373.6 518.51 373.6C526.35 373.6 530.27 373.6 538.1 373.6C545.93 373.6 549.85 373.6 557.69 373.6C565.52 373.6 569.44 373.6 577.27 373.6C585.11 373.6 589.03 373.6 596.86 373.6C604.69 373.6 608.61 373.6 616.45 373.6C624.28 373.6 628.2 373.6 636.03 373.6C643.87 373.6 647.79 373.6 655.62 373.6C663.45 373.6 667.37 373.6 675.21 373.6C683.04 373.6 686.96 373.6 694.79 373.6C702.63 373.6 706.55 373.6 714.38 373.6C722.21 373.6 726.13 373.6 733.97 373.6C741.8 373.6 745.72 373.6 753.55 373.6C761.39 373.6 765.31 373.6 773.14 373.6C780.97 373.6 784.89 373.6 792.73 373.6C800.56 373.6 804.48 373.6 812.31 373.6C820.15 373.6 824.07 373.6 831.9 373.6L831.9 373.6L244.3 373.6Z" fill="rgba(53,124,165,0.2)" stroke="none"/>
<path d="M244.3 373.6C252.13 373.6 256.05 373.6 263.89 373.6C271.72 373.6 275.64 373.6 283.47 373.6C291.31 373.6 295.23 373.6 303.06 373.6C310.89 373.6 314.81 373.6 322.65 373.6C330.48 373.6 334.4 373.6 342.23 373.6C350.07 373.6 353.99 373.6 361.82 373.6C369.65 373.6 373.57 373.6 381.41 373.6C389.24 373.6 393.16 373.6 400.99 373.6C408.83 373.6 412.75 373.6 420.58 373.6C428.41 373.6 432.33 373.6 440.17 373.6C448 373.6 451.92 373.6 459.75 373.6C467.59 373.6 471.51 373.6 479.34 373.6C487.17 373.6 491.09 373.6 498.93 373.6C506.76 373.6 510.68 373.6 518.51 373.6C526.35 373.6 530.27 373.6 538.1 373.6C545.93 373.6 549.85 373.6 557.69 373.6C565.52 373.6 569.44 373.6 577.27 373.6C585.11 373.6 589.03 373.6 596.86 373.6C604.69 373.6 608.61 373.6 616.45 373.6C624.28 373.6 628.2 373.6 636.03 373.6C643.87 373.6 647.79 373.6 655.62 373.6C663.45 373.6 667.37 373.6 675.21 373.6C683.04 373.6 686.96 373.6 694.79 373.6C702.63 373.6 706.55 373.6 714.38 373.6C722.21 373.6 726.13 373.6 733.97 373.6C741.8 373.6 745.72 373.6 753.55 373.6C761.39 373.6 765.31 373.6 773.14 373.6C780.97 373.6 784.89 373.6 792.73 373.6C800.56 373.6 804.48 373.6 812.31 373.6C820.15 373.6 824.07 373.6 831.9 373.6" fill="none" stroke="rgba(0,0,0,0.1)" stroke-width="2.17"/>
<g fill="rgba(53,124,165,0.2)" stroke="rgba(0,0,0,0.1)" stroke-width="0.72">
<circle cx="244.3" cy="373.6" r="2.17"/>
<circle cx="263.89" cy="373.6" r="2.17"/>
<circle cx="283.47" cy="373.6" r="2.17"/>
<circle cx="303.06" cy="373.6" r="2.17"/>
<circle cx="322.65" cy="373.6" r="2.17"/>
<circle cx="342.23" cy="373.6" r="2.17"/>
<circle cx="361.82" cy="373.6" r="2.17"/>
<circle cx="381.41" cy="373.6" r="2.17"/>
<circle cx="400.99" cy="373.6" r="2.17"/>
<circle cx="420.58" cy="373.6" r="2.17"/>
<circle cx="440.17" cy="373.6" r="2.17"/>
<circle cx="459.75" cy="373.6" r="2.17"/>
<circle cx="479.34" cy="373.6" r="2.17"/>
<circle cx="498.93" cy="373.6" r="2.17"/>
<circle cx="518.51" cy="373.6" r="2.17"/>
<circle cx="538.1" cy="373.6" r="2.17"/>
<circle cx="557.69" cy="373.6" r="2.17"/>
<circle cx="577.27" cy="373.6" r="2.17"/>
<circle cx="596.86" cy="373.6" r="2.17"/>
<circle cx="616.45" cy="373.6" r="2.17"/>
<circle cx="636.03" cy="373.6" r="2.17"/>
<circle cx="655.62" cy="373.6" r="2.17"/>
<circle cx="675.21" cy="373.6" r="2.17"/>
<circle cx="694.79" cy="373.6" r="2.17"/>
<circle cx="714.38" cy="373.6" r="2.17"/>
<circle cx="733.97" cy="373.6" r="2.17"/>
<circle cx="753.55" cy="373.6" r="2.17"/>
<circle cx="773.14" cy="373.6" r="2.17"/>
<circle cx="792.73" cy="373.6" r="2.17"/>
<circle cx="812.31" cy="373.6" r="2.17"/>
<circle cx="831.9" cy="373.6" r="2.17"/>
</g>
<text transform="translate(243.7 411.63) rotate(-49.5)" text-anchor="end" y="3.12" xml:space="preserve">December  1, 2016</text>
<text transform="translate(282.87 411.63) rotate(-49.5)" text-anchor="end" y="3.12" xml:space="preserve">December  3, 2016</text>
<text transform="translate(322.05 411.63) rotate(-49.5)" text-anchor="end" y="3.12" xml:space="preserve">December  5, 2016</text>
<text transform="translate(361.22 411.63) rotate(-49.5)" text-anchor="end" y="3.12" xml:space="preserve">December  7, 2016</text>
<text transform="translate(400.39 411.63) rotate(-49.5)" text-anchor="end" y="3.12" xml:space="preserve">December  9, 2016</text>
<text transform="translate(439.57 411.63) rotate(-49.5)" text-anchor="end" y="3.12" xml:space="preserve">December 11, 2016</text>
<text transform="translate(478.74 411.63) rotate(-49.5)" text-anchor="end" y="3.12" xml:space="preserve">December 13, 2016</text>
<text transform="translate(517.91 411.63) rotate(-49.5)" text-anchor="end" y="3.12" xml:space="preserve">December 15, 2016</text>
<text transform="translate(557.09 411.63) rotate(-49.5)" text-anchor="end" y="3.12" xml:space="preserve">December 17, 2016</text>
<text transform="translate(596.26 411.63) rotate(-49.5)" text-anchor="end" y="3.12" xml:space="preserve">December 19, 2016</text>
<text transform="translate(635.43 411.63) rotate(-49.5)" text-anchor="end" y="3.12" xml:space="preserve">December 21, 2016</text>
<text transform="translate(674.61 411.63) rotate(-49.5)" text-anchor="end" y="3.12" xml:space="preserve">December 23, 2016</text>
<text transform="translate(713.78 411.63) rotate(-49.5)" text-anchor="end" y="3.12" xml:space="preserve">December 25, 2016</text>
<text transform="translate(752.95 411.63) rotate(-49.5)" text-anchor="end" y="3.12" xml:space="preserve">December 27, 2016</text>
<text transform="translate(792.13 411.63) rotate(-49.5)" text-anchor="end" y="3.12" xml:space="preserve">December 29, 2016</text>
<text transform="translate(831.3 411.63) rotate(-49.5)" text-anchor="end" y="3.12" xml:space="preserve">December 31, 2016</text>
</svg>
        </div>
        <div class="box">
          <div class="box-header wb"><h3 class="box-title">Budgets and spending</h3></div>
          <div class="box-body chartbody"></div>
          <svg class="chart" viewBox="178.34 503.54 667.15 336.46" preserveAspectRatio="none" font-family="Liberation Sans, sans-serif" font-size="8.66" fill="#666">
<line x1="234" x2="837.7" y1="546.7" y2="546.7" stroke="rgba(0,0,0,0.1)" stroke-width="0.72"/>
<text x="233" y="549.82" text-anchor="end">€ 1,000.00</text>
<line x1="234" x2="837.7" y1="573.19" y2="573.19" stroke="rgba(0,0,0,0.1)" stroke-width="0.72"/>
<text x="233" y="576.31" text-anchor="end">€ 900.00</text>
<line x1="234" x2="837.7" y1="599.68" y2="599.68" stroke="rgba(0,0,0,0.1)" stroke-width="0.72"/>
<text x="233" y="602.8" text-anchor="end">€ 800.00</text>
<line x1="234" x2="837.7" y1="626.17" y2="626.17" stroke="rgba(0,0,0,0.1)" stroke-width="0.72"/>
<text x="233" y="629.29" text-anchor="end">€ 700.00</text>
<line x1="234" x2="837.7" y1="652.66" y2="652.66" stroke="rgba(0,0,0,0.1)" stroke-width="0.72"/>
<text x="233" y="655.78" text-anchor="end">€ 600.00</text>
<line x1="234" x2="837.7" y1="679.15" y2="679.15" stroke="rgba(0,0,0,0.1)" stroke-width="0.72"/>
<text x="233" y="682.27" text-anchor="end">€ 500.00</text>
<line x1="234" x2="837.7" y1="705.64" y2="705.64" stroke="rgba(0,0,0,0.1)" stroke-width="0.72"/>
<text x="233" y="708.76" text-anchor="end">€ 400.00</text>
<line x1="234" x2="837.7" y1="732.13" y2="732.13" stroke="rgba(0,0,0,0.1)" stroke-width="0.72"/>
<text x="233" y="735.25" text-anchor="end">€ 300.00</text>
<line x1="234" x2="837.7" y1="758.62" y2="758.62" stroke="rgba(0,0,0,0.1)" stroke-width="0.72"/>
<text x="233" y="761.74" text-anchor="end">€ 200.00</text>
<line x1="234" x2="837.7" y1="785.11" y2="785.11" stroke="rgba(0,0,0,0.1)" stroke-width="0.72"/>
<text x="233" y="788.23" text-anchor="end">€ 100.00</text>
<line x1="234" x2="837.7" y1="811.6" y2="811.6" stroke="rgba(0,0,0,0.25)" stroke-width="0.72"/>
<text x="233" y="814.72" text-anchor="end">€ 0.00</text>
<line x1="241.1" x2="241.1" y1="541.9" y2="811.6" stroke="rgba(0,0,0,0.1)" stroke-width="0.72"/>
<rect x="255.15" y="562.59" width="115" height="249.01" fill="rgba(219,139,11,0.2)"/>
<rect x="255.15" y="795.71" width="115" height="15.89" fill="rgba(0,141,76,0.2)"/>
<rect x="399" y="773.19" width="115" height="38.41" fill="rgba(219,139,11,0.2)"/>
<rect x="399" y="797.03" width="115" height="14.57" fill="rgba(0,141,76,0.2)"/>
<rect x="542.85" y="798.09" width="115" height="13.51" fill="rgba(219,139,11,0.2)"/>
<rect x="542.85" y="798.09" width="115" height="13.51" fill="rgba(0,141,76,0.2)"/>
<rect x="686.7" y="767.36" width="115" height="44.24" fill="rgba(219,139,11,0.2)"/>
<rect x="686.7" y="802.06" width="115" height="9.54" fill="rgba(0,141,76,0.2)"/>
<text x="312.65" y="825.9" text-anchor="middle">Bills</text>
<text x="456.5" y="825.9" text-anchor="middle">Car</text>
<text x="600.35" y="825.9" text-anchor="middle">Going out</text>
<text x="744.2" y="825.9" text-anchor="middle">Groceries</text>
</svg>
        </div>
        <div class="box">
          <div class="box-header wb"><h3 class="box-title">Categories</h3></div>
          <div class="box-body chartbody"></div>
          <svg class="chart" viewBox="178.34 854.44 667.15 336.46" preserveAspectRatio="none" font-family="Liberation Sans, sans-serif" font-size="8.66" fill="#666">
<line x1="234" x2="837.7" y1="897.6" y2="897.6" stroke="rgba(0,0,0,0.1)" stroke-width="0.72"/>
<text x="233" y="900.72" text-anchor="end">€ 1,000.00</text>
<line x1="234" x2="837.7" y1="924.09" y2="924.09" stroke="rgba(0,0,0,0.1)" stroke-width="0.72"/>
<text x="233" y="927.21" text-anchor="end">€ 900.00</text>
<line x1="234" x2="837.7" y1="950.58" y2="950.58" stroke="rgba(0,0,0,0.1)" stroke-width="0.72"/>
<text x="233" y="953.7" text-anchor="end">€ 800.00</text>
<line x1="234" x2="837.7" y1="977.07" y2="977.07" stroke="rgba(0,0,0,0.1)" stroke-width="0.72"/>
<text x="233" y="980.19" text-anchor="end">€ 700.00</text>
<line x1="234" x2="837.7" y1="1003.56" y2="1003.56" stroke="rgba(0,0,0,0.1)" stroke-width="0.72"/>
<text x="233" y="1006.68" text-anchor="end">€ 600.00</text>
<line x1="234" x2="837.7" y1="1030.05" y2="1030.05" stroke="rgba(0,0,0,0.1)" stroke-width="0.72"/>
<text x="233" y="1033.17" text-anchor="end">€ 500.00</text>
<line x1="234" x2="837.7" y1="1056.54" y2="1056.54" stroke="rgba(0,0,0,0.1)" stroke-width="0.72"/>
<text x="233" y="1059.66" text-anchor="end">€ 400.00</text>
<line x1="234" x2="837.7" y1="1083.03" y2="1083.03" stroke="rgba(0,0,0,0.1)" stroke-width="0.72"/>
<text x="233" y="1086.15" text-anchor="end">€ 300.00</text>
<line x1="234" x2="837.7" y1="1109.52" y2="1109.52" stroke="rgba(0,0,0,0.1)" stroke-width="0.72"/>
<text x="233" y="1112.64" text-anchor="end">€ 200.00</text>
<line x1="234" x2="837.7" y1="1136.01" y2="1136.01" stroke="rgba(0,0,0,0.1)" stroke-width="0.72"/>
<text x="233" y="1139.13" text-anchor="end">€ 100.00</text>
<line x1="234" x2="837.7" y1="1162.5" y2="1162.5" stroke="rgba(0,0,0,0.25)" stroke-width="0.72"/>
<text x="233" y="1165.62" text-anchor="end">€ 0.00</text>
<line x1="241.2" x2="241.2" y1="892.8" y2="1162.5" stroke="rgba(0,0,0,0.1)" stroke-width="0.72"/>
<rect x="252.5" y="913.49" width="91.7" height="249.01" fill="rgba(53,124,165,0.2)"/>
</svg>
        </div>
      </div>
      <div class="col4">
        <div class="box">
          <div class="box-header wb"><h3 class="box-title">Bills</h3></div>
          <div class="box-body" style="height:169px"></div>
          <svg class="chart" viewBox="866.43 152.64 322.74 154.51" preserveAspectRatio="none">
<circle cx="1027.7" cy="246.4" r="51.9" fill="#6fa1c0"/>
<line x1="1027.7" y1="246.4" x2="1027.7" y2="193.5" stroke="#fff" stroke-width="1.44" stroke-linecap="round"/>
</svg>
        </div>
        <div class="box"><div class="box-header wb"><h3 class="box-title"><a>Alternate Checking Account</a></h3><span class="tools"><svg class="ic" width="9" height="12" viewBox="0 0 16 16" ><g fill="currentColor"><rect x="6" y="1" width="4" height="3.600" rx=".6"/><rect x="6" y="6.200" width="4" height="3.600" rx=".6"/><rect x="6" y="11.400" width="4" height="3.600" rx=".6"/></g></svg></span></div>
<div class="box-body"><p><em>There are no transactions (in this period) for asset account "Alternate Checking Account".</em></p></div><div class="box-footer"><span class="btn">€0.00</span></div></div>
        <div class="box"><div class="box-header wb"><h3 class="box-title"><a>Checking Account</a></h3><span class="tools"><svg class="ic" width="9" height="12" viewBox="0 0 16 16" ><g fill="currentColor"><rect x="6" y="1" width="4" height="3.600" rx=".6"/><rect x="6" y="6.200" width="4" height="3.600" rx=".6"/><rect x="6" y="11.400" width="4" height="3.600" rx=".6"/></g></svg></span></div>
<div class="lg"><a class="lgi"><span class="ti"><svg class="ic" width="15" height="15" viewBox="0 0 16 16" ><path fill="currentColor" d="M0 4.200h12V2l4 3.300-4 3.300V6.400H0zM16 9.600H4V7.400L0 10.700 4 14v-2.200h12z"/></svg></span><span class="tl">Saving money for December</span><span class="amt neg">-€150.00</span></a>
<a class="lgi"><span class="ti"><svg class="ic" width="15" height="15" viewBox="0 0 16 16" ><path fill="currentColor" d="M0 8l4.500-3.800V6.900H16v2.200H4.500v2.700z"/></svg></span><span class="tl">Needed gas again</span><span class="amt neg">-€48.14</span></a>
<a class="lgi"><span class="ti"><svg class="ic" width="15" height="15" viewBox="0 0 16 16" ><path fill="currentColor" d="M0 8l4.500-3.800V6.900H16v2.200H4.500v2.700z"/></svg></span><span class="tl">Going out for drinks again</span><span class="amt neg">-€25.70</span></a>
<a class="lgi"><span class="ti"><svg class="ic" width="15" height="15" viewBox="0 0 16 16" ><path fill="currentColor" d="M0 8l4.500-3.800V6.900H16v2.200H4.500v2.700z"/></svg></span><span class="tl">Groceries</span><span class="amt neg">-€16.78</span></a>
<a class="lgi"><span class="ti"><svg class="ic" width="15" height="15" viewBox="0 0 16 16" ><path fill="currentColor" d="M16 8l-4.500-3.800V6.900H0v2.200h11.500v2.700z"/></svg></span><span class="tl">Salary in December</span><span class="amt pos">€1,565.96</span></a>
<a class="lgi"><span class="ti"><svg class="ic" width="15" height="15" viewBox="0 0 16 16" ><path fill="currentColor" d="M0 8l4.500-3.800V6.900H16v2.200H4.500v2.700z"/></svg></span><span class="tl">Groceries</span><span class="amt neg">-€19.60</span></a>
<a class="lgi"><span class="ti"><svg class="ic" width="15" height="15" viewBox="0 0 16 16" ><path fill="currentColor" d="M0 8l4.500-3.800V6.900H16v2.200H4.500v2.700z"/></svg></span><span class="tl">Groceries</span><span class="amt neg">-€23.63</span></a>
<a class="lgi"><span class="ti"><svg class="ic" width="15" height="15" viewBox="0 0 16 16" ><path fill="currentColor" d="M0 8l4.500-3.800V6.900H16v2.200H4.500v2.700z"/></svg></span><span class="tl">Filled the car up again</span><span class="amt neg">-€48.18</span></a>
<a class="lgi"><span class="ti"><svg class="ic" width="15" height="15" viewBox="0 0 16 16" ><path fill="currentColor" d="M0 8l4.500-3.800V6.900H16v2.200H4.500v2.700z"/></svg></span><span class="tl">Groceries</span><span class="amt neg">-€23.78</span></a>
<a class="lgi"><span class="ti"><svg class="ic" width="15" height="15" viewBox="0 0 16 16" ><path fill="currentColor" d="M0 8l4.500-3.800V6.900H16v2.200H4.500v2.700z"/></svg></span><span class="tl">Going out for drinks</span><span class="amt neg">-€26.28</span></a>
</div><div class="box-footer"><span class="btn">€5,635.64</span></div></div>
        <div class="box"><div class="box-header wb"><h3 class="box-title"><a>Emergency Savings Account</a></h3><span class="tools"><svg class="ic" width="9" height="12" viewBox="0 0 16 16" ><g fill="currentColor"><rect x="6" y="1" width="4" height="3.600" rx=".6"/><rect x="6" y="6.200" width="4" height="3.600" rx=".6"/><rect x="6" y="11.400" width="4" height="3.600" rx=".6"/></g></svg></span></div>
<div class="box-body"><p><em>There are no transactions (in this period) for asset account "Emergency Savings Account".</em></p></div><div class="box-footer"><span class="btn">€200.00</span></div></div>
        <div class="box"><div class="box-header wb"><h3 class="box-title"><a>Savings Account</a></h3><span class="tools"><svg class="ic" width="9" height="12" viewBox="0 0 16 16" ><g fill="currentColor"><rect x="6" y="1" width="4" height="3.600" rx=".6"/><rect x="6" y="6.200" width="4" height="3.600" rx=".6"/><rect x="6" y="11.400" width="4" height="3.600" rx=".6"/></g></svg></span></div>
<div class="box-body"><p><em>There are no transactions (in this period) for asset account "Savings Account".</em></p></div><div class="box-footer"><span class="btn">€5,400.00</span></div></div>
      </div>
    </div>
  </section>
</div>
</div>
</body>
</html>
